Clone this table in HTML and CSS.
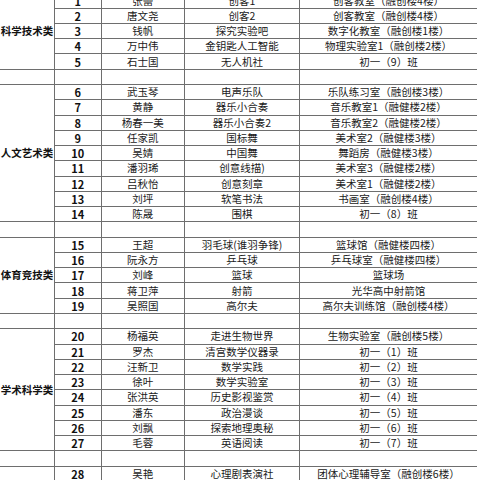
FILE: index.html
```html
<!DOCTYPE html>
<html lang="zh-CN">
<head>
<meta charset="utf-8">
<title>社团安排表</title>
<link rel="stylesheet" href="styles.css">
</head>
<body>
<div class="viewport">
<table class="sheet">
  <colgroup>
    <col class="c-cat"><col class="c-no"><col class="c-name"><col class="c-club"><col class="c-room">
  </colgroup>
  <tbody>
    <tr><td class="cat" rowspan="5">科学技术类</td><td class="no">1</td><td>张蕾</td><td>创客1</td><td>创客教室（融创楼4楼）</td></tr>
    <tr><td class="no">2</td><td>唐文尧</td><td>创客2</td><td>创客教室（融创楼4楼）</td></tr>
    <tr><td class="no">3</td><td>钱帆</td><td>探究实验吧</td><td>数字化教室（融创楼1楼）</td></tr>
    <tr><td class="no">4</td><td>万中伟</td><td>金钥匙人工智能</td><td>物理实验室1（融创楼2楼）</td></tr>
    <tr><td class="no">5</td><td>石士国</td><td>无人机社</td><td>初一（9）班</td></tr>
    <tr class="sep"><td></td><td></td><td></td><td></td><td></td></tr>

    <tr><td class="cat" rowspan="9">人文艺术类</td><td class="no">6</td><td>武玉琴</td><td>电声乐队</td><td>乐队练习室（融创楼3楼）</td></tr>
    <tr><td class="no">7</td><td>黄静</td><td>器乐小合奏</td><td>音乐教室1（融健楼2楼）</td></tr>
    <tr><td class="no">8</td><td>杨春一美</td><td>器乐小合奏2</td><td>音乐教室2（融健楼2楼）</td></tr>
    <tr><td class="no">9</td><td>任家凯</td><td>国标舞</td><td>美术室2（融健楼3楼）</td></tr>
    <tr><td class="no">10</td><td>吴婧</td><td>中国舞</td><td>舞蹈房（融健楼3楼）</td></tr>
    <tr><td class="no">11</td><td>潘羽琋</td><td>创意线描)</td><td>美术室3（融健楼2楼）</td></tr>
    <tr><td class="no">12</td><td>吕秋怡</td><td>创意刻章</td><td>美术室1（融健楼2楼）</td></tr>
    <tr><td class="no">13</td><td>刘坪</td><td>软笔书法</td><td>书画室（融创楼4楼）</td></tr>
    <tr><td class="no">14</td><td>陈晟</td><td>围棋</td><td>初一（8）班</td></tr>
    <tr class="sep"><td></td><td></td><td></td><td></td><td></td></tr>

    <tr><td class="cat" rowspan="5">体育竞技类</td><td class="no">15</td><td>王超</td><td>羽毛球(谁羽争锋)</td><td>篮球馆（融健楼四楼）</td></tr>
    <tr><td class="no">16</td><td>阮永方</td><td>乒乓球</td><td>乒乓球室（融健楼四楼）</td></tr>
    <tr><td class="no">17</td><td>刘峰</td><td>篮球</td><td>篮球场</td></tr>
    <tr><td class="no">18</td><td>蒋卫萍</td><td>射箭</td><td>光华高中射箭馆</td></tr>
    <tr><td class="no">19</td><td>吴照国</td><td>高尔夫</td><td>高尔夫训练馆（融创楼4楼）</td></tr>
    <tr class="sep"><td></td><td></td><td></td><td></td><td></td></tr>

    <tr><td class="cat" rowspan="8">学术科学类</td><td class="no">20</td><td>杨福英</td><td>走进生物世界</td><td>生物实验室（融创楼5楼）</td></tr>
    <tr><td class="no">21</td><td>罗杰</td><td>清宫数学仪器录</td><td>初一（1）班</td></tr>
    <tr><td class="no">22</td><td>汪新卫</td><td>数学实践</td><td>初一（2）班</td></tr>
    <tr><td class="no">23</td><td>徐叶</td><td>数学实验室</td><td>初一（3）班</td></tr>
    <tr><td class="no">24</td><td>张洪英</td><td>历史影视鉴赏</td><td>初一（4）班</td></tr>
    <tr><td class="no">25</td><td>潘东</td><td>政治漫谈</td><td>初一（5）班</td></tr>
    <tr><td class="no">26</td><td>刘飘</td><td>探索地理奥秘</td><td>初一（6）班</td></tr>
    <tr><td class="no">27</td><td>毛蓉</td><td>英语阅读</td><td>初一（7）班</td></tr>
    <tr class="sep"><td></td><td></td><td></td><td></td><td></td></tr>

    <tr><td class="cat"></td><td class="no">28</td><td>吴艳</td><td>心理剧表演社</td><td>团体心理辅导室（融创楼6楼）</td></tr>
  </tbody>
</table>
</div>
</body>
</html>
```

FILE: styles.css
```css
html, body {
  margin: 0;
  padding: 0;
  background: #ffffff;
  overflow: hidden;
}

.viewport {
  width: 480px;
  height: 480px;
  overflow: hidden;
}

.sheet {
  margin-top: -7.6px;
  width: 477px;
  table-layout: fixed;
  border-collapse: collapse;
  font-family: "Noto Sans CJK SC", "Noto Sans", sans-serif;
  font-size: 10.5px;
  color: #1a1a1a;
}

.c-cat { width: 54.5px; }
.c-no { width: 46.5px; }
.c-name { width: 83.5px; }
.c-club { width: 115px; }
.c-room { width: 177.5px; }

.sheet tr {
  height: 14.267px;
}

.sheet td {
  padding: 0;
  height: 14.267px;
  line-height: 12px;
  text-align: center;
  vertical-align: middle;
  white-space: nowrap;
  overflow: hidden;
  border: 1px solid #6e6e6e;
}

.sheet td:first-child {
  border-left: none;
}

.sheet td:last-child {
  border-right: none;
}

.sheet td.cat {
  font-weight: bold;
  color: #111111;
  border-left: none;
}

.sheet td.no {
  font-weight: bold;
  font-size: 11px;
  color: #111111;
}
```
